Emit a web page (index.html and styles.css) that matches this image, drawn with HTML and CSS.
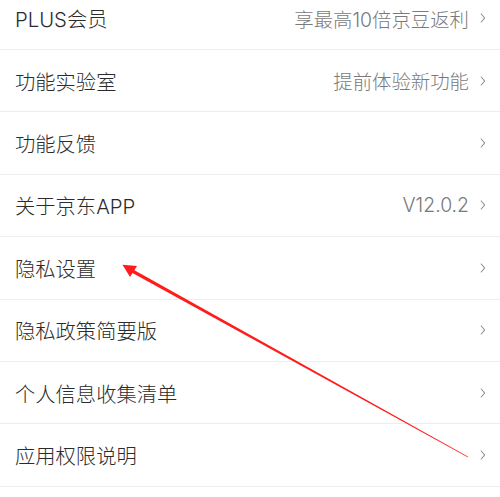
FILE: index.html
```html
<!DOCTYPE html>
<html lang="zh-CN">
<head>
<meta charset="utf-8">
<link rel="stylesheet" href="styles.css">
</head>
<body>
<div class="page">
  <ul class="list">
    <li class="row"><span class="label">PLUS会员</span><span class="value">享最高10倍京豆返利</span><svg class="chev" viewBox="0 0 6 10"><path d="M1.2 1 Q3.5 3.5 4.6 5 Q3.5 6.5 1.2 9"/></svg></li>
    <li class="row"><span class="label">功能实验室</span><span class="value">提前体验新功能</span><svg class="chev" viewBox="0 0 6 10"><path d="M1.2 1 Q3.5 3.5 4.6 5 Q3.5 6.5 1.2 9"/></svg></li>
    <li class="row"><span class="label">功能反馈</span><span class="value"></span><svg class="chev" viewBox="0 0 6 10"><path d="M1.2 1 Q3.5 3.5 4.6 5 Q3.5 6.5 1.2 9"/></svg></li>
    <li class="row"><span class="label">关于京东APP</span><span class="value">V12.0.2</span><svg class="chev" viewBox="0 0 6 10"><path d="M1.2 1 Q3.5 3.5 4.6 5 Q3.5 6.5 1.2 9"/></svg></li>
    <li class="row"><span class="label">隐私设置</span><span class="value"></span><svg class="chev" viewBox="0 0 6 10"><path d="M1.2 1 Q3.5 3.5 4.6 5 Q3.5 6.5 1.2 9"/></svg></li>
    <li class="row"><span class="label">隐私政策简要版</span><span class="value"></span><svg class="chev" viewBox="0 0 6 10"><path d="M1.2 1 Q3.5 3.5 4.6 5 Q3.5 6.5 1.2 9"/></svg></li>
    <li class="row"><span class="label">个人信息收集清单</span><span class="value"></span><svg class="chev" viewBox="0 0 6 10"><path d="M1.2 1 Q3.5 3.5 4.6 5 Q3.5 6.5 1.2 9"/></svg></li>
    <li class="row"><span class="label">应用权限说明</span><span class="value"></span><svg class="chev" viewBox="0 0 6 10"><path d="M1.2 1 Q3.5 3.5 4.6 5 Q3.5 6.5 1.2 9"/></svg></li>
  </ul>
  <svg class="arrow" viewBox="0 0 500 497" width="500" height="497">
    <polygon points="468.2,457.4 467.8,456.6 131.8,268.8 130.2,271.8" fill="#ff1c1c"/>
    <polygon points="122.5,264.8 137.0,266.0 130.0,277.0" fill="#ff1c1c"/>
  </svg>
</div>
</body>
</html>
```

FILE: styles.css
```css
* {
  box-sizing: border-box;
}
html, body {
  margin: 0;
  padding: 0;
  background: #ffffff;
}
body {
  font-family: "Inter", "Noto Sans CJK SC", sans-serif;
  width: 500px;
  height: 497px;
  overflow: hidden;
}
.page {
  position: relative;
  width: 500px;
  height: 497px;
  overflow: hidden;
}
.list {
  list-style: none;
  margin: -12.4px 0 0 0;
  padding: 0;
}
.row {
  height: 62.4px;
  display: flex;
  align-items: center;
  padding: 0 14px 0 15px;
  border-bottom: 1.2px solid #ededed;
}
.label {
  font-size: 20.3px;
  font-weight: 300;
  color: #2b2b2b;
  flex: 1;
  white-space: nowrap;
}
.value {
  font-size: 19.4px;
  font-weight: 300;
  color: #7a7a7a;
  margin-right: 11px;
  white-space: nowrap;
}
.chev {
  width: 6px;
  height: 10px;
  flex: none;
}
.chev path {
  fill: none;
  stroke: #8c8c8c;
  stroke-width: 1.1;
  stroke-linecap: round;
}
.arrow {
  position: absolute;
  left: 0;
  top: 0;
  pointer-events: none;
}
```
